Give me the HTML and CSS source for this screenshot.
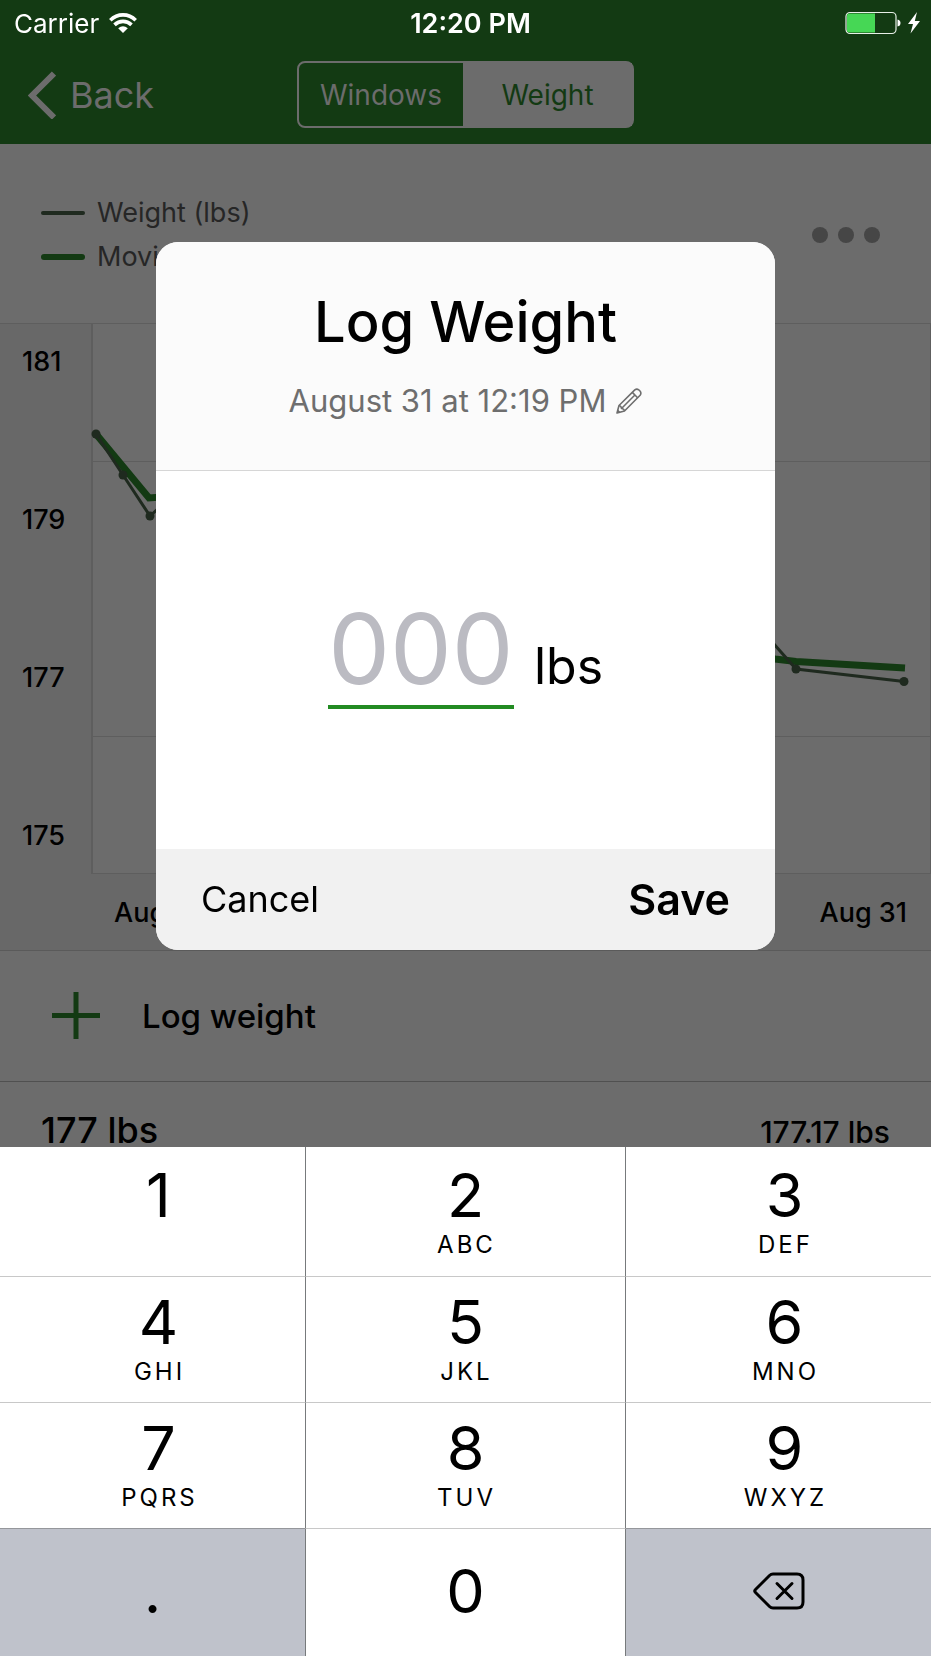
FILE: index.html
```html
<!DOCTYPE html>
<html lang="en">
<head>
<meta charset="utf-8">
<meta name="viewport" content="width=device-width, initial-scale=1">
<title>Log Weight</title>
<link rel="stylesheet" href="styles.css">
</head>
<body>
<div class="screen">
  <header class="nav">
    <button class="back" type="button">
      <svg width="28" height="48" viewBox="0 0 28 48" aria-hidden="true"><path d="M26 2.500 4 24.500 26 46.500" fill="none" stroke="currentColor" stroke-width="6"/></svg>
      Back
    </button>
    <div class="segments">
      <button class="segment" type="button" aria-pressed="false">Windows</button>
      <button class="segment segment-on" type="button" aria-pressed="true">Weight</button>
    </div>
  </header>

  <section class="legend">
    <ul class="legend-list">
      <li class="legend-item"><span class="swatch"></span>Weight (lbs)</li>
      <li class="legend-item"><span class="swatch swatch-average"></span>Moving average</li>
    </ul>
    <button class="more" type="button" aria-label="More">
      <svg width="68" height="16" viewBox="0 0 68 16" aria-hidden="true"><g fill="currentColor"><circle cx="8" cy="8" r="8"/><circle cx="34" cy="8" r="8"/><circle cx="60" cy="8" r="8"/></g></svg>
    </button>
  </section>

  <section class="chart">
    <div class="axis-y"><span>181</span><span>179</span><span>177</span><span>175</span></div>
    <svg class="plot" viewBox="0 0 840 550" preserveAspectRatio="none" aria-hidden="true">
      <path d="M0 137.500H840M0 412.500H840M0 549.500H840M839.500 0V550" fill="none" stroke="#5e5e5e"/>
      <path d="M1 0V550" fill="none" stroke="#5e5e5e" stroke-width="2"/>
      <path d="M5 110 58 174 100 171 300 239 500 299 684 335 705 337.500 814 344" fill="none" stroke="#133a13" stroke-width="7"/>
      <path d="M5 110 32 151 59 192 90 164 300 249 500 309 660 294 705 345 813 357.500" fill="none" stroke="#1f2a1f" stroke-width="3"/>
      <g fill="#1f2a1f"><circle cx="5" cy="110" r="4.500"/><circle cx="32" cy="151" r="4.500"/><circle cx="59" cy="192" r="4.500"/><circle cx="705" cy="345" r="4.500"/><circle cx="813" cy="357.500" r="4.500"/></g>
    </svg>
    <div class="axis-x"><span>Aug 1</span><span>Aug 31</span></div>
  </section>

  <button class="add-row" type="button">
    <svg width="48" height="48" viewBox="0 0 48 48" aria-hidden="true"><path d="M24 0V47M0 23.500H48" fill="none" stroke="#133a13" stroke-width="5"/></svg>
    Log weight
  </button>

  <div class="entry"><span>177 lbs</span><span class="entry-average">177.17 lbs</span></div>
</div>

<div class="layer">
  <div class="status">
    <div class="carrier">Carrier
      <svg width="28" height="21" viewBox="0 0 28 21" aria-hidden="true"><g fill="none" stroke="currentColor" stroke-width="3.600"><path d="M1.300 7.200C8.500.1 19.500.1 26.700 7.200"/><path d="M5.500 11.900C10.300 7.200 17.700 7.200 22.500 11.900"/></g><path d="M9.200 15.200Q14 11.200 18.800 15.200L14 20Z" fill="currentColor"/></svg>
    </div>
    <time class="clock">12:20 PM</time>
    <svg class="battery" width="82" height="24" viewBox="0 0 82 24" aria-hidden="true">
      <rect x="1" y="1.500" width="50" height="21" rx="4" fill="none" stroke="#e8efe8" stroke-width="1.200"/>
      <path d="M4 2.500H30V21.500H4Q2 21.500 2 19.500V4.500Q2 2.500 4 2.500Z" fill="#46d755"/>
      <path d="M52.500 8.500Q55.500 9 55.500 12T52.500 15.500Z" fill="#fff"/>
      <path d="M72 1 63 13H68L65.500 22.500 75 10H69.800Z" fill="#fff"/>
    </svg>
  </div>

  <div class="stage">
    <form class="dialog" role="dialog" aria-labelledby="dialog-title">
      <div class="dialog-head">
        <h1 class="dialog-title" id="dialog-title">Log Weight</h1>
        <button class="date" type="button">August 31 at 12:19 PM
          <svg width="26" height="26" viewBox="0 0 26 26" aria-hidden="true"><g fill="none" stroke="currentColor" stroke-width="1.600" stroke-linejoin="round"><path d="M1 25 3 17.500 18.800 1.900Q20.800.3 22.700 1.800L24.200 3.300Q25.600 5.300 24.100 7.200L8.500 23Z"/><path d="M3 17.500Q5.300 17.800 5.500 20.500 8.200 20.700 8.500 23M16.300 4.400 21.600 9.700M5.500 20.500 18.900 7"/></g><path d="M1 25 1.900 21.500 4.500 24.100Z" fill="currentColor"/></svg>
        </button>
      </div>
      <div class="dialog-body">
        <input class="weight" id="weight" type="text" inputmode="decimal" placeholder="000">
        <label class="unit" for="weight">lbs</label>
      </div>
      <div class="dialog-foot">
        <button class="cancel" type="button">Cancel</button>
        <button class="save" type="submit">Save</button>
      </div>
    </form>
  </div>

  <div class="keypad">
    <button class="key key-side" type="button"><span class="digit">1</span><span class="letters"></span></button>
    <button class="key key-mid" type="button"><span class="digit">2</span><span class="letters">ABC</span></button>
    <button class="key key-side" type="button"><span class="digit">3</span><span class="letters">DEF</span></button>
    <button class="key key-side" type="button"><span class="digit">4</span><span class="letters">GHI</span></button>
    <button class="key key-mid" type="button"><span class="digit">5</span><span class="letters">JKL</span></button>
    <button class="key key-side" type="button"><span class="digit">6</span><span class="letters">MNO</span></button>
    <button class="key key-side" type="button"><span class="digit">7</span><span class="letters">PQRS</span></button>
    <button class="key key-mid" type="button"><span class="digit">8</span><span class="letters">TUV</span></button>
    <button class="key key-side" type="button"><span class="digit">9</span><span class="letters">WXYZ</span></button>
    <button class="key key-last key-gray" type="button"><span class="digit">.</span></button>
    <button class="key key-last key-mid" type="button"><span class="digit">0</span></button>
    <button class="key key-last key-gray" type="button" aria-label="Delete">
      <svg width="52" height="38" viewBox="0 0 52 38" aria-hidden="true"><g fill="none" stroke="#000" stroke-width="3" stroke-linecap="round" stroke-linejoin="round"><path d="M20 2H44Q50 2 50 8V30Q50 36 44 36H20Q18 36 16.500 34.500L2.500 20.500Q1 19 2.500 17.500L16.500 3.500Q18 2 20 2Z"/><path d="M24 11.500 39 26.500M39 11.500 24 26.500"/></g></svg>
    </button>
  </div>
</div>
</body>
</html>
```
FILE: styles.css
```css
* {
  box-sizing: border-box;
}

body {
  margin: 0;
  background: #6c6c6c;
  color: #000;
  font-family: Inter, "Liberation Sans", sans-serif;
  font-size: 27px;
}

button,
input {
  margin: 0;
  padding: 0;
  border: 0;
  border-radius: 0;
  background: none;
  color: inherit;
  font: inherit;
}

svg {
  display: block;
  flex: none;
}

.screen {
  height: 100vh;
  overflow: hidden;
}

.nav {
  display: grid;
  grid-template-columns: 1fr auto 1fr;
  align-items: center;
  height: 144px;
  padding: 46px 28px 1px;
  background: #133a13;
  color: #6c6c6c;
}

.back {
  display: flex;
  align-items: center;
  justify-self: start;
  gap: 14px;
  font-size: 36px;
}

.segments {
  display: flex;
  height: 67px;
  border: 2px solid #6c6c6c;
  border-radius: 8px;
  font-size: 28px;
}

.segment {
  width: 164px;
}

.segment-on {
  width: 169px;
  background: #6c6c6c;
  color: #133a13;
}

.legend {
  display: flex;
  align-items: center;
  justify-content: space-between;
  height: 179px;
  padding: 2px 51px 0 41px;
}

.legend-list {
  margin: 0;
  padding: 0;
  list-style: none;
  line-height: 44px;
  color: #262626;
}

.legend-item {
  display: flex;
  align-items: center;
  gap: 12px;
}

.swatch {
  width: 44px;
  height: 4px;
  border-radius: 2px;
  background: #1f2a1f;
}

.swatch-average {
  height: 6px;
  border-radius: 3px;
  background: #133a13;
}

.more {
  color: #464646;
}

.chart {
  display: grid;
  grid-template-columns: 91px 1fr;
  border-top: 1px solid #5e5e5e;
  border-bottom: 1px solid #5a5a5a;
  background: #686868;
  font-weight: 500;
  line-height: 32px;
}

.axis-y {
  display: flex;
  flex-direction: column;
  gap: 126px;
  padding: 22px 0 0 22px;
}

.plot {
  width: 100%;
  height: 550px;
  background: #6c6c6c;
}

.axis-x {
  grid-column: 1 / -1;
  display: flex;
  justify-content: space-between;
  padding: 23px 24px 21px 114px;
}

.add-row {
  display: flex;
  align-items: center;
  gap: 42px;
  width: 100%;
  height: 131px;
  padding: 0 52px;
  border-bottom: 1px solid #505050;
  font-size: 33px;
  font-weight: 500;
}

.entry {
  display: flex;
  align-items: baseline;
  justify-content: space-between;
  padding: 28px 41px;
  font-size: 36px;
  font-weight: 500;
  line-height: 40px;
}

.entry-average {
  font-size: 30px;
}

.layer {
  position: fixed;
  inset: 0;
  display: flex;
  flex-direction: column;
}

.status {
  display: grid;
  grid-template-columns: 1fr auto 1fr;
  align-items: center;
  height: 46px;
  padding: 0 4px 0 14px;
  color: #fff;
}

.carrier {
  display: flex;
  align-items: center;
  gap: 10px;
  font-size: 26px;
}

.clock {
  font-weight: 600;
}

.battery {
  justify-self: end;
}

.stage {
  flex: 1;
  display: flex;
  align-items: center;
  justify-content: center;
  padding-bottom: 2px;
}

.dialog {
  width: 66.5%;
  border-radius: 22px;
  overflow: hidden;
  background: #fff;
}

.dialog-head {
  display: flex;
  flex-direction: column;
  align-items: center;
  gap: 23px;
  padding: 44px 24px 49px;
  border-bottom: 1px solid #d6d6d6;
  background: #fbfbfb;
}

.dialog-title {
  margin: 0;
  font-size: 56px;
  font-weight: 500;
  line-height: 72px;
}

.date {
  display: flex;
  align-items: center;
  gap: 10px;
  color: #6e6e6e;
  font-size: 31px;
  line-height: 40px;
}

.dialog-body {
  display: flex;
  align-items: baseline;
  justify-content: center;
  gap: 20px;
  height: 378px;
  padding-top: 122px;
}

.weight {
  width: 186px;
  height: 116px;
  border-bottom: 4px solid #228b22;
  outline: 0;
  font-size: 98px;
  text-align: center;
}

.weight::placeholder {
  color: #bbbbc2;
  opacity: 1;
}

.unit {
  font-size: 50px;
}

.dialog-foot {
  display: flex;
  align-items: center;
  justify-content: space-between;
  height: 101px;
  padding: 0 45px;
  background: #f1f1f1;
}

.cancel {
  font-size: 36px;
}

.save {
  font-size: 43px;
  font-weight: 600;
}

.keypad {
  display: grid;
  grid-template-columns: 305fr 321fr 305fr;
  grid-template-rows: 129px 126px 126px 128px;
  background: #fff;
}

.key {
  display: flex;
  flex-direction: column;
  align-items: center;
  justify-content: center;
  border-top: 1px solid #c8c8c8;
}

.key:nth-child(-n + 3) {
  padding-top: 2px;
  border-top: 0;
}

.key-side {
  padding-left: 12px;
}

.key-mid {
  border-right: 1px solid #777a7c;
  border-left: 1px solid #777a7c;
}

.key-last {
  padding-bottom: 3px;
}

.key-gray {
  border-top-color: #95979b;
  background: #bfc2cb;
}

.digit {
  font-size: 61px;
  line-height: 64px;
}

.letters {
  height: 36px;
  padding-left: 2px;
  font-size: 24px;
  line-height: 36px;
  letter-spacing: 3px;
}
```
